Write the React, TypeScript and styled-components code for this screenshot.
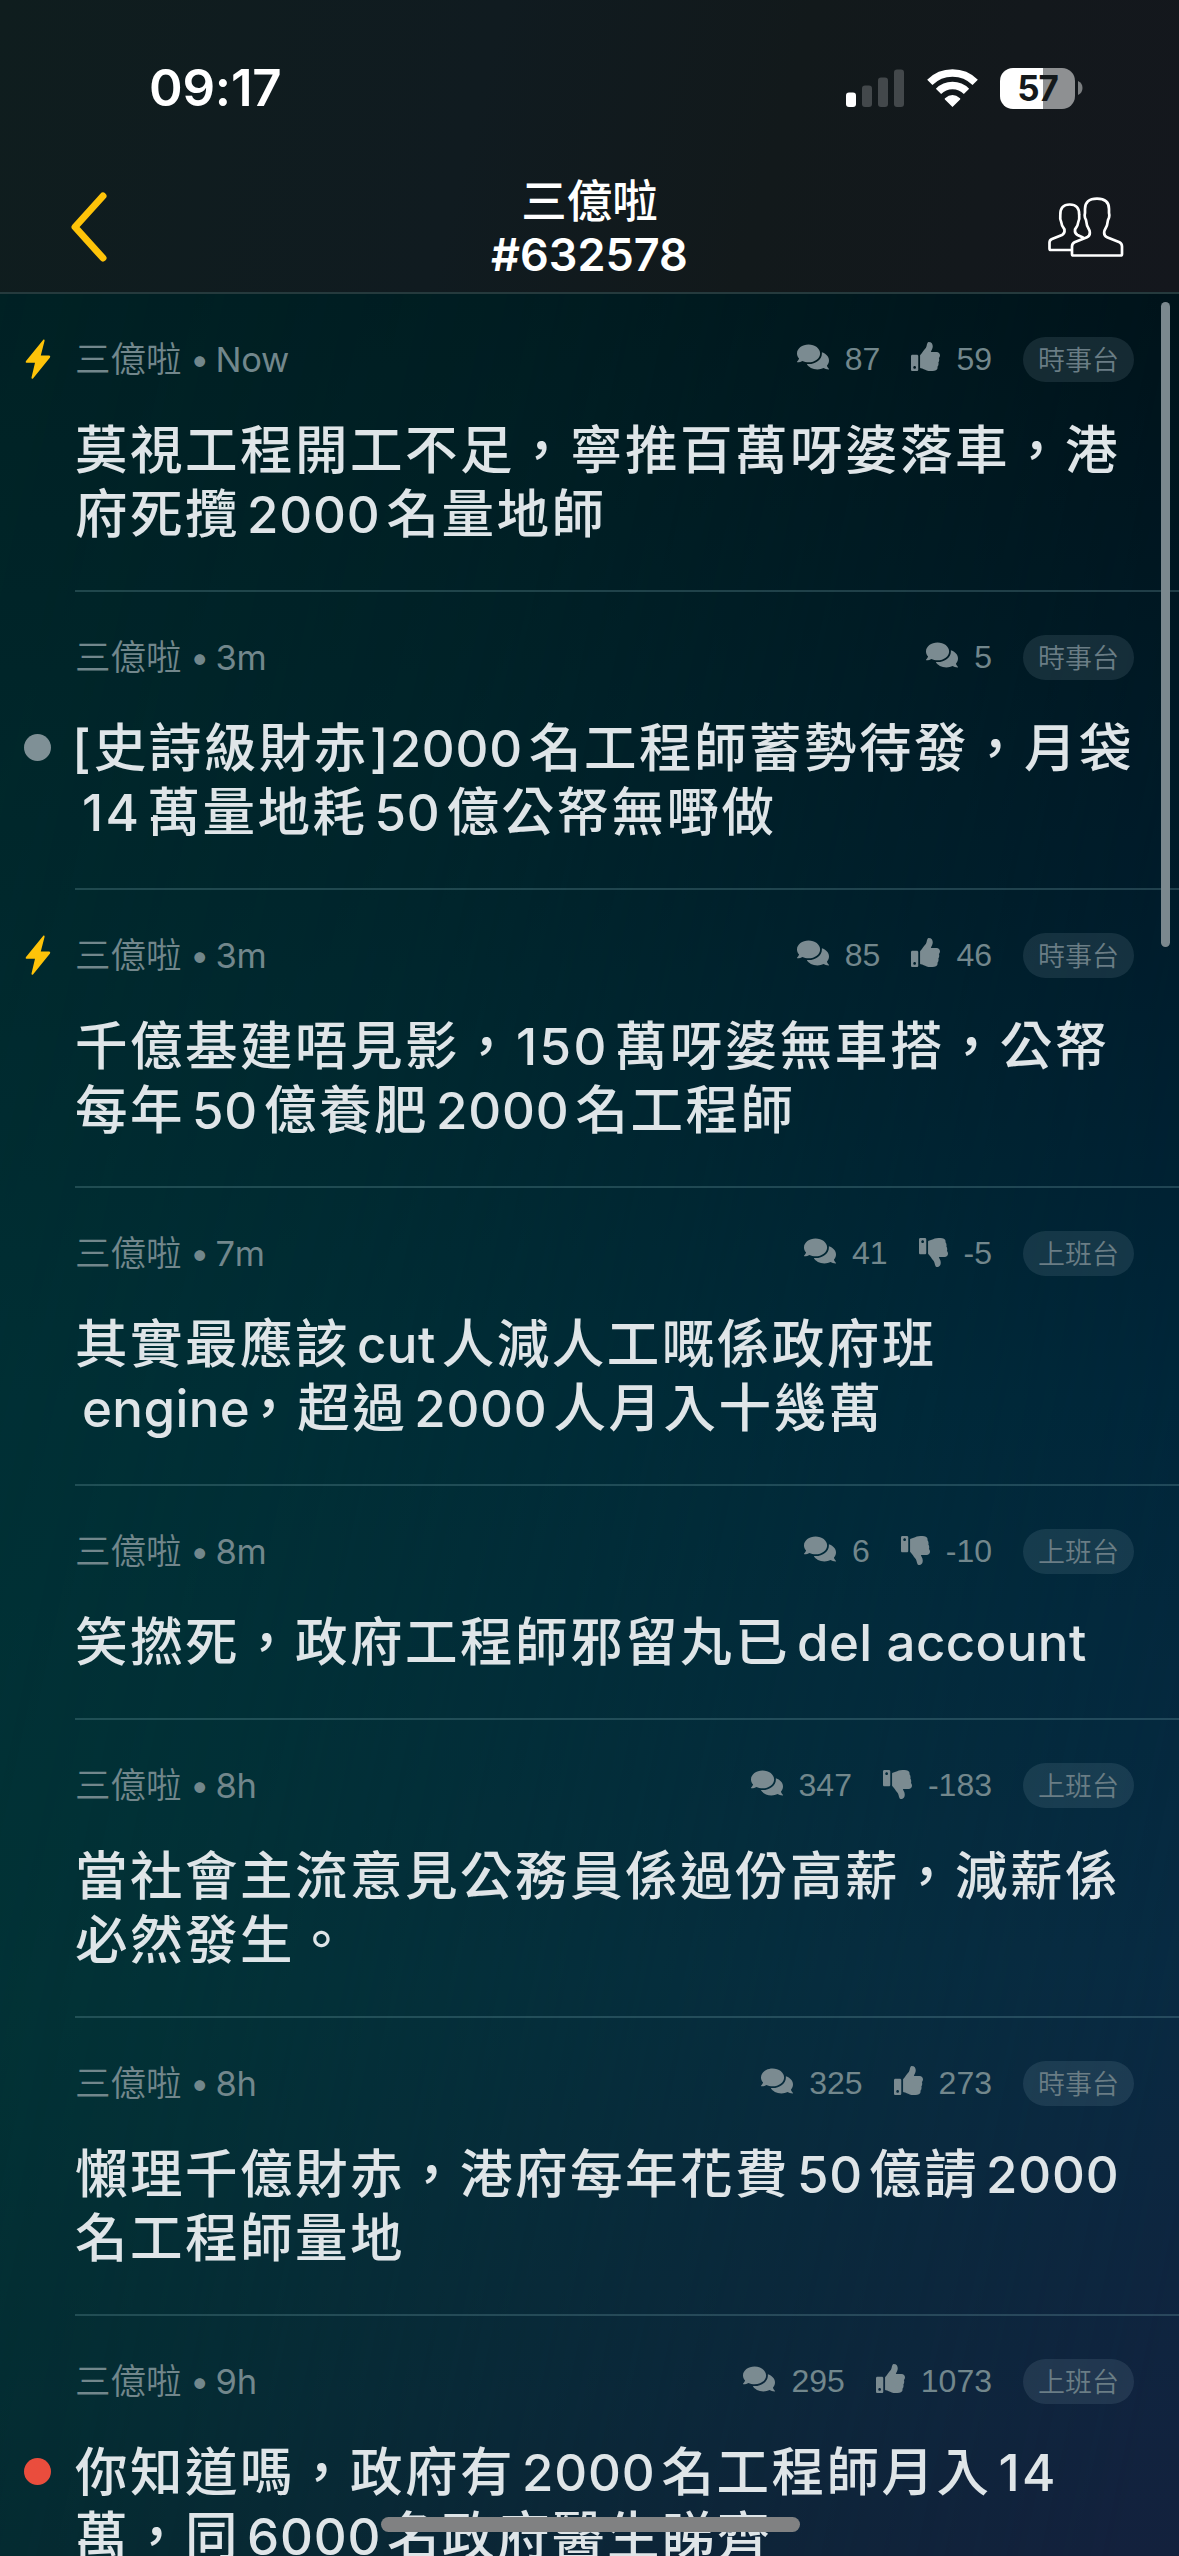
import React from "react";
import styled, { createGlobalStyle } from "styled-components";
import { FaComments, FaThumbsUp } from "react-icons/fa";

const cjk = `"Noto Sans CJK TC", "Noto Sans CJK HK", sans-serif`;

const GlobalStyle = createGlobalStyle`
  * { box-sizing: border-box; }
  body { margin: 0; background: #00262b; }
`;

const Screen = styled.main`
  width: 1179px;
  height: 2556px;
  position: relative;
  isolation: isolate;
  overflow: hidden;
  display: flex;
  flex-direction: column;
  font-family: Inter, ${cjk};
  background: linear-gradient(180deg, #002020 0, #002225 294px, #002a2d 900px, #003134 1400px, #003433 2000px, #002e2e 2556px);

  &::before {
    content: "";
    position: absolute;
    inset: 0;
    z-index: -1;
    background: linear-gradient(180deg, #000b14 0, #000d16 294px, #00182a 900px, #00253b 1400px, #082a43 1950px, #13213d 2556px);
    mask-image: linear-gradient(102deg, transparent 0%, rgba(0, 0, 0, 0.25) 35%, rgba(0, 0, 0, 0.58) 62%, black 97%);
  }
`;

const Header = styled.header`
  height: 294px;
  flex: none;
  display: flex;
  flex-direction: column;
  color: #fff;
  border-bottom: 2px solid #253a3d;
  background: linear-gradient(105deg, #0f1d1e 0%, #101b20 40%, #12191b 65%, #14171d 100%);
`;

const StatusBar = styled.div`
  height: 176px;
  flex: none;
  padding: 0 96px 0 149px;
  display: flex;
  align-items: center;
  justify-content: space-between;
`;

const Clock = styled.time`
  font-size: 51px;
  font-weight: 600;
  letter-spacing: -0.2px;
  line-height: 60px;
`;

const StatusIcons = styled.div`
  display: flex;
  align-items: center;
  gap: 22px;
`;

const Battery = styled.div`
  display: flex;
  align-items: center;
  gap: 3px;
`;

const BatteryBody = styled.div`
  width: 75px;
  height: 41px;
  border-radius: 13px;
  display: flex;
  align-items: center;
  justify-content: center;
  color: #14191b;
  font-size: 35px;
  font-weight: 700;
  letter-spacing: -1.2px;
  background: linear-gradient(90deg, #fff 57%, #8e9092 57%);
`;

const NavBar = styled.nav`
  flex: 1;
  padding: 0 54px 15px 69px;
  display: grid;
  grid-template-columns: 120px 1fr 135px;
  align-items: center;
`;

const NavTitle = styled.h1`
  margin: 0;
  font-size: 45px;
  line-height: 44px;
  font-weight: 600;
  text-align: center;
`;

const NavName = styled.div`
  margin-bottom: 13px;
  font-family: ${cjk};
  font-size: 45.5px;
  font-weight: 500;
`;

const NavAction = styled.div`
  display: flex;
  justify-content: flex-end;
`;

const List = styled.ul`
  flex: 1;
  min-height: 0;
  margin: 0;
  padding: 0;
  list-style: none;
  overflow: hidden;
`;

const Row = styled.li`
  display: grid;
  grid-template-columns: 75px 1fr;
`;

const Gutter = styled.div`
  padding-top: 43px;
  display: flex;
  flex-direction: column;
  align-items: center;
`;

const BoltSlot = styled.div`
  height: 45px;
  display: flex;
  align-items: center;
`;

const Dot = styled.span<{ $color: string }>`
  width: 27px;
  height: 27px;
  margin-top: 54px;
  border-radius: 50%;
  background: ${(p) => p.$color};
`;

const Content = styled.article`
  padding: 43px 45px 48px 0;
  border-bottom: 2px solid rgba(120, 165, 175, 0.27);
`;

const Meta = styled.div`
  height: 45px;
  display: flex;
  align-items: center;
  color: #72878c;
`;

const Author = styled.span`
  flex: 1;
  padding-bottom: 3px;
  font-family: ${cjk};
  font-size: 35.5px;
  line-height: 42px;
  font-weight: 350;
`;

const Age = styled.span`
  font-family: Inter, sans-serif;
  font-size: 34.5px;
  font-weight: 400;
  letter-spacing: -0.3px;
  word-spacing: -3px;
  margin-left: 8.5px;
`;

const Stat = styled.span`
  display: flex;
  align-items: center;
  font-family: "Liberation Sans", Arial, sans-serif;
  font-size: 32px;
  line-height: 45px;
  margin-right: 31px;
`;

const StatIcon = styled.span<{ $gap: number; $flip?: boolean }>`
  display: flex;
  margin-right: ${(p) => p.$gap}px;
  color: #7b8b91;
  transform: ${(p) => (p.$flip ? "translateY(-1px) scaleY(-1)" : "translateY(-3px)")};
`;

const Tag = styled.span`
  width: 111px;
  height: 45px;
  padding-bottom: 1px;
  border-radius: 23px;
  display: flex;
  align-items: center;
  justify-content: center;
  font-family: ${cjk};
  font-size: 27px;
  font-weight: 350;
  line-height: 44px;
  color: #6a7d85;
  background: rgba(150, 175, 190, 0.14);
`;

const Title = styled.h2`
  margin: 32px 0 0;
  font-family: ${cjk};
  font-size: 52.5px;
  line-height: 64px;
  font-weight: 500;
  letter-spacing: 2.5px;
  color: #dfe5e8;
`;

const Line = styled.div`
  white-space: pre;
  height: 64px;
`;

const Latin = styled.span<{ $before: number; $after: number; $tracking: number }>`
  font-family: Inter, sans-serif;
  font-size: 51px;
  letter-spacing: ${(p) => p.$tracking}px;
  margin-left: ${(p) => p.$before}px;
  margin-right: ${(p) => p.$after}px;
`;

const ScrollThumb = styled.div`
  position: absolute;
  right: 9px;
  top: 302px;
  width: 9px;
  height: 645px;
  border-radius: 5px;
  background: #7b888e;
`;

const HomeIndicator = styled.div`
  position: absolute;
  left: 381px;
  bottom: 24px;
  width: 419px;
  height: 15px;
  border-radius: 8px;
  background: #808182;
`;

type Post = {
  age: string;
  replies: number;
  score?: number;
  tag: string;
  mark?: "bolt" | "read" | "new";
  lines: string[];
};

const posts: Post[] = [
  { age: "Now", replies: 87, score: 59, tag: "時事台", mark: "bolt", lines: ["莫視工程開工不足，寧推百萬呀婆落車，港", "府死攬2000名量地師"] },
  { age: "3m", replies: 5, tag: "時事台", mark: "read", lines: ["[史詩級財赤]2000名工程師蓄勢待發，月袋", "14萬量地耗50億公帑無嘢做"] },
  { age: "3m", replies: 85, score: 46, tag: "時事台", mark: "bolt", lines: ["千億基建唔見影，150萬呀婆無車搭，公帑", "每年50億養肥2000名工程師"] },
  { age: "7m", replies: 41, score: -5, tag: "上班台", lines: ["其實最應該cut人減人工嘅係政府班", "engine，超過2000人月入十幾萬"] },
  { age: "8m", replies: 6, score: -10, tag: "上班台", lines: ["笑撚死，政府工程師邪留丸已del account"] },
  { age: "8h", replies: 347, score: -183, tag: "上班台", lines: ["當社會主流意見公務員係過份高薪，減薪係", "必然發生。"] },
  { age: "8h", replies: 325, score: 273, tag: "時事台", lines: ["懶理千億財赤，港府每年花費50億請2000", "名工程師量地"] },
  { age: "9h", replies: 295, score: 1073, tag: "上班台", mark: "new", lines: ["你知道嗎，政府有2000名工程師月入14", "萬，同6000名政府醫生睇齊"] },
];

/* Splits a line into CJK and Latin runs, and pads the Latin ones. */
function TitleLine({ text }: { text: string }) {
  const runs = text.match(/[[\]]|[a-z0-9 ]+|[^[\]a-z0-9 ]+/g) || [];
  return (
    <Line>
      {runs.map((run, i) => {
        if (run === "[") return <Latin key={i} $tracking={0} $before={-3} $after={3}>{run}</Latin>;
        if (run === "]") return <Latin key={i} $tracking={0} $before={1} $after={1}>{run}</Latin>;
        if (/^[a-z0-9 ]+$/.test(run)) {
          const prev = runs[i - 1] || "";
          const next = runs[i + 1] || "";
          return (
            <Latin
              key={i}
              $tracking={/[a-z]/.test(run) ? 0.4 : run.includes("1") ? 2.4 : 0.8}
              $before={prev === "]" ? 0 : prev.endsWith("，") ? 1 : 7}
              $after={next.startsWith("，") ? -8 : 6}
            >
              {run}
            </Latin>
          );
        }
        return <React.Fragment key={i}>{run}</React.Fragment>;
      })}
    </Line>
  );
}

function Signal() {
  return (
    <svg width="59" height="38" viewBox="0 0 59 38">
      <rect x="0" y="23.500" width="10" height="14.500" rx="3" fill="#fff" />
      <rect x="16" y="16.500" width="10" height="21.500" rx="3" fill="#43484b" />
      <rect x="32" y="8.500" width="10" height="29.500" rx="3" fill="#43484b" />
      <rect x="48" y="0.500" width="10" height="37.500" rx="3" fill="#43484b" />
    </svg>
  );
}

function Wifi() {
  return (
    <svg width="51" height="38" viewBox="0 0 51 38">
      <g fill="none" stroke="#fff" strokeWidth="7.500">
        <path d="M2.800 13.400 A32.200 32.200 0 0 1 48.200 13.400" />
        <path d="M11.500 22.300 A19.800 19.800 0 0 1 39.500 22.300" />
      </g>
      <path d="M25.500 38 L17.900 30.400 Q17.400 29.800 18 29.300 Q25.500 22.800 33 29.300 Q33.600 29.800 33.100 30.400 Z" fill="#fff" />
    </svg>
  );
}

function BatteryCap() {
  return (
    <svg width="5" height="14" viewBox="0 0 5 14">
      <path d="M0 0 Q4.500 2 4.500 7 Q4.500 12 0 14 Z" fill="#7b7e80" />
    </svg>
  );
}

function Back() {
  return (
    <svg width="40" height="74" viewBox="0 0 40 74" fill="none" stroke="#fec309" strokeWidth="7" strokeLinecap="round" strokeLinejoin="round">
      <path d="M34 6 L6 37 L34 68" />
    </svg>
  );
}

function Friends() {
  return (
    <svg width="78" height="62" viewBox="0 0 78 62" fill="none" stroke="#fff" strokeWidth="2.700" strokeLinejoin="round" strokeLinecap="round">
      <path d="M24 54 H4 Q2.500 54 2.500 52.500 V46.500 Q2.500 44 5 43 L15 39 Q18 37.500 17.500 33.500 Q14.500 30 14.200 26 Q12.800 23 13.300 19 Q13 8.500 22.700 8.500 Q32.500 8.500 32.200 19 Q32.700 23 31.300 26 Q31 30 28 33.500 Q27.500 37.500 30.500 39 L36 41.500" />
      <path d="M26.500 59.500 Q25 59.500 25 58 V50.500 Q25 47.500 27.500 46.300 L40 41.200 Q43.800 39.700 42.500 34.500 Q39.300 29.500 39 24 Q37 21 38 17 V13 Q38 2.700 50 2.700 Q62 2.700 62 13 V17 Q63 21 61 24 Q60.700 29.500 57.500 34.500 Q56.200 39.700 60 41.200 L72.500 46.300 Q75 47.500 75 50.500 V58 Q75 59.500 73.500 59.500 Z" />
    </svg>
  );
}

function Bolt() {
  return (
    <svg width="26" height="41" viewBox="0 0 26 41" fill="#fec309">
      <path d="M18.500.6 L.8 22.200 Q.4 23.700 1.500 23.700 H10 L6.500 38.500 Q6.500 40.500 8 39.500 L25 18.500 Q25.800 16.800 24.300 16.500 H15.800 L19.600 1.800 Q19.700.2 18.500.6 Z" />
    </svg>
  );
}

function PostRow({ post }: { post: Post }) {
  return (
    <Row>
      <Gutter>
        <BoltSlot>{post.mark === "bolt" && <Bolt />}</BoltSlot>
        {post.mark === "read" && <Dot $color="#7f9096" />}
        {post.mark === "new" && <Dot $color="#ea4d3d" />}
      </Gutter>
      <Content>
        <Meta>
          <Author>
            三億啦<Age>• {post.age}</Age>
          </Author>
          <Stat>
            <StatIcon $gap={16}><FaComments size={32} /></StatIcon>
            {post.replies}
          </Stat>
          {post.score !== undefined && (
            <Stat>
              <StatIcon $gap={16} $flip={post.score < 0}><FaThumbsUp size={29} /></StatIcon>
              {post.score}
            </Stat>
          )}
          <Tag>{post.tag}</Tag>
        </Meta>
        <Title>
          {post.lines.map((line) => <TitleLine key={line} text={line} />)}
        </Title>
      </Content>
    </Row>
  );
}

export default function App() {
  return (
    <Screen lang="zh-Hant">
      <GlobalStyle />
      <Header>
        <StatusBar>
          <Clock>09:17</Clock>
          <StatusIcons>
            <Signal />
            <Wifi />
            <Battery>
              <BatteryBody>57</BatteryBody>
              <BatteryCap />
            </Battery>
          </StatusIcons>
        </StatusBar>
        <NavBar>
          <Back />
          <NavTitle>
            <NavName>三億啦</NavName>
            #632578
          </NavTitle>
          <NavAction><Friends /></NavAction>
        </NavBar>
      </Header>
      <List>
        {posts.map((post, i) => <PostRow key={i} post={post} />)}
      </List>
      <ScrollThumb />
      <HomeIndicator />
    </Screen>
  );
}
